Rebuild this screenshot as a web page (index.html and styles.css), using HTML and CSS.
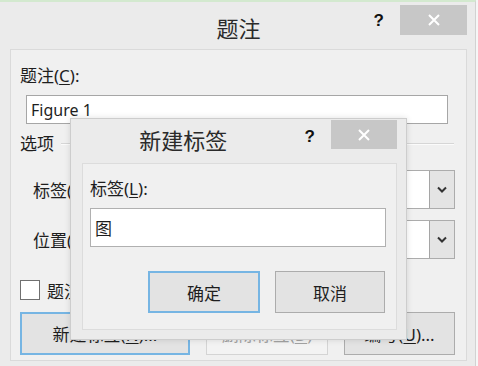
FILE: index.html
```html
<!DOCTYPE html>
<html lang="zh-CN">
<head>
    <meta charset="UTF-8">
    <title>题注</title>
    <link rel="stylesheet" href="styles.css">
</head>
<body>

    <div class="window">
        <div class="titlebar">
            <span></span>
            <span class="title">题注</span>
            <div class="caption-buttons">
                <span class="help">?</span>
                <span class="close">
                    <svg width="14" height="14" viewBox="0 0 14 14"><path d="M2 2L12 12M12 2L2 12" stroke="#fff" stroke-width="2"/></svg>
                </span>
            </div>
        </div>
        <div class="client">
            <div class="label">题注(<u>C</u>):</div>
            <div class="textbox caption-box">Figure 1</div>
            <div class="group-title"><span>选项</span><span class="rule"></span></div>
            <div class="field-row first">
                <span class="field-label">标签(<u>L</u>):</span>
                <div class="combo">
                    <span class="combo-text">图</span>
                    <span class="combo-arrow"><svg width="10" height="7" viewBox="0 0 10 7"><path d="M1 1.5L5 5.5L9 1.5" fill="none" stroke="#333" stroke-width="2"/></svg></span>
                </div>
            </div>
            <div class="field-row">
                <span class="field-label">位置(<u>P</u>):</span>
                <div class="combo">
                    <span class="combo-text">所选项目下方</span>
                    <span class="combo-arrow"><svg width="10" height="7" viewBox="0 0 10 7"><path d="M1 1.5L5 5.5L9 1.5" fill="none" stroke="#333" stroke-width="2"/></svg></span>
                </div>
            </div>
            <div class="check-row">
                <span class="checkbox"></span>
                <span>题注中不包含标签(<u>E</u>)</span>
            </div>
            <div class="button-row">
                <button class="btn default new-label">新建标签(<u>N</u>)...</button>
                <button class="btn disabled delete-label">删除标签(<u>D</u>)</button>
                <button class="btn numbering">编号(<u>U</u>)...</button>
            </div>
        </div>

        <div class="dialog">
            <div class="dialog-titlebar">
                <span class="dialog-title">新建标签</span>
                <span class="help">?</span>
                <span class="close small">
                    <svg width="14" height="14" viewBox="0 0 14 14"><path d="M2 2L12 12M12 2L2 12" stroke="#fff" stroke-width="2"/></svg>
                </span>
            </div>
            <div class="dialog-client">
                <div class="label">标签(<u>L</u>):</div>
                <div class="textbox label-box">图</div>
                <div class="dialog-buttons">
                    <button class="btn default ok">确定</button>
                    <button class="btn cancel">取消</button>
                </div>
            </div>
        </div>
    </div>

</body>
</html>
```

FILE: styles.css
```css
* {
    box-sizing: border-box;
}
body {
    margin: 0;
    background: #f6f6f6;
    font-family: "Noto Sans", "Noto Sans CJK SC", sans-serif;
    font-size: 17px;
    color: #1e1e1e;
}
u {
    text-decoration: underline;
    text-underline-offset: 2px;
}
.window {
    position: relative;
    width: 476px;
    height: 366px;
    display: flex;
    flex-direction: column;
    background: #ebebeb;
    border-top: 2px solid #d3e9cf;
    border-right: 1px solid #d2d2d2;
    padding: 0 8px 5px 10px;
}
.titlebar {
    height: 47px;
    display: grid;
    grid-template-columns: 1fr auto 1fr;
    align-items: start;
}
.title {
    font-size: 22px;
    line-height: 30px;
    margin-top: 11px;
    color: #2a2a2a;
}
.caption-buttons {
    display: flex;
    justify-content: flex-end;
    align-items: flex-start;
}
.help {
    font-family: "Liberation Sans", sans-serif;
    font-weight: bold;
    font-size: 17px;
    line-height: 18px;
    color: #111;
}
.caption-buttons .help {
    margin-top: 10px;
    margin-right: 16px;
}
.close {
    width: 67px;
    height: 30px;
    margin-top: 3px;
    background: #c7c7c7;
    display: flex;
    align-items: center;
    justify-content: center;
}
.client {
    flex: 1;
    background: #f0f0f0;
    border: 1px solid #dadada;
    display: flex;
    flex-direction: column;
}
.label {
    line-height: 20px;
    height: 20px;
}
.client > .label {
    margin-top: 16px;
    padding-left: 9px;
}
.textbox {
    background: #fff;
    border: 1px solid #a6a6a6;
    display: flex;
    align-items: center;
    padding-left: 4px;
}
.caption-box {
    margin-top: 9px;
    margin-left: 15px;
    width: 422px;
    height: 29px;
    font-size: 16px;
}
.group-title {
    margin-top: 10px;
    height: 20px;
    line-height: 20px;
    padding-left: 9px;
    display: flex;
    align-items: center;
}
.group-title .rule {
    width: 393px;
    margin-left: 7px;
    border-top: 1px solid #d6d6d6;
    border-bottom: 1px solid #fbfbfb;
}
.field-row {
    margin-top: 11px;
    height: 39px;
    display: flex;
    align-items: center;
    padding-left: 22px;
}
.field-row.first {
    margin-top: 16px;
}
.field-label {
    width: 67px;
}
.combo {
    width: 355px;
    height: 39px;
    background: #fff;
    border: 1px solid #acacac;
    display: flex;
    align-items: center;
}
.combo-text {
    flex: 1;
    padding-left: 6px;
}
.combo-arrow {
    width: 25px;
    height: 100%;
    background: #e4e4e4;
    border-left: 1px solid #a5a5a5;
    display: flex;
    align-items: center;
    justify-content: center;
}
.check-row {
    margin-top: 21px;
    height: 20px;
    display: flex;
    align-items: center;
    padding-left: 9px;
    gap: 7px;
}
.checkbox {
    width: 20px;
    height: 20px;
    background: #fff;
    border: 1px solid #707070;
}
.button-row {
    margin-top: 12px;
    height: 43px;
    display: flex;
    padding-left: 9px;
    gap: 16px;
}
.btn {
    font-family: "Noto Sans", "Noto Sans CJK SC", sans-serif;
    font-size: 17px;
    color: #1e1e1e;
    background: #e3e3e3;
    border: 1px solid #acacac;
    padding: 0;
    height: 100%;
}
.btn.default {
    border: 2px solid #76b5e3;
}
.btn.disabled {
    color: #a3a3a3;
    background: #f3f3f3;
    border-color: #d4d4d4;
}
.new-label {
    width: 170px;
}
.delete-label {
    width: 122px;
}
.numbering {
    width: 111px;
}
.dialog {
    position: absolute;
    left: 70px;
    top: 116px;
    width: 337px;
    height: 222px;
    background: #ebebeb;
    border: 1px solid #cdcdcd;
    box-shadow: 0 0 6px rgba(0, 0, 0, 0.12);
    padding: 0 9px 9px 11px;
    display: flex;
    flex-direction: column;
}
.dialog-titlebar {
    height: 44px;
    display: flex;
    align-items: flex-start;
}
.dialog-title {
    flex: 1;
    text-align: center;
    font-size: 22px;
    line-height: 30px;
    margin-top: 6px;
    margin-right: 20px;
    color: #2a2a2a;
}
.dialog-titlebar .help {
    margin-top: 9px;
    margin-right: 16px;
}
.close.small {
    width: 66px;
    height: 29px;
    margin-top: 1px;
}
.dialog-client {
    flex: 1;
    background: #f0f0f0;
    border: 1px solid #dcdcdc;
    padding: 0 10px 0 7px;
    display: flex;
    flex-direction: column;
}
.dialog-client .label {
    margin-top: 15px;
}
.label-box {
    margin-top: 9px;
    height: 39px;
    border-color: #b0b0b0;
}
.dialog-buttons {
    margin-top: 24px;
    height: 42px;
    display: flex;
    justify-content: flex-end;
    gap: 15px;
    padding-right: 1px;
}
.ok {
    width: 112px;
}
.cancel {
    width: 110px;
}
```
